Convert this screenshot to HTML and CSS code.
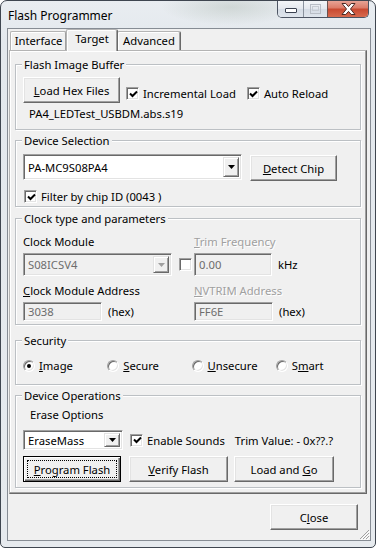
FILE: index.html
```html
<!DOCTYPE html>
<html>
<head>
<meta charset="utf-8">
<title>Flash Programmer</title>
<link rel="stylesheet" href="styles.css">
</head>
<body>
<div class="window">
  <div class="titlebar">
    <span class="title">Flash Programmer</span>
    <div class="caption-buttons">
      <div class="cb cb-min"><svg width="12" height="6" viewBox="0 0 12 6"><rect x="0.5" y="0.5" width="11" height="4" rx="0.5" fill="#fff" stroke="#3a4150"/></svg></div>
      <div class="cb cb-max"><svg width="11" height="10" viewBox="0 0 11 10"><rect x="0.5" y="0.5" width="10" height="9" fill="none" stroke="#b9bec6"/><rect x="2.5" y="2.5" width="6" height="4" fill="none" stroke="#c7ccd3"/></svg></div>
      <div class="cb cb-close"><svg width="15" height="12" viewBox="0 0 15 12"><path d="M1 0.5 H4.8 L7.5 3.6 L10.2 0.5 H14 L9.5 6 L14 11.5 H10.2 L7.5 8.4 L4.8 11.5 H1 L5.5 6 Z" fill="#fff" stroke="#4a2a25" stroke-width="1" stroke-linejoin="round"/></svg></div>
    </div>
  </div>
  <div class="client">
    <div class="tabs">
      <div class="tab tab-first">Interface</div>
      <div class="tab tab-active">Target</div>
      <div class="tab tab-last">Advanced</div>
    </div>
    <div class="panel">
      <div class="group g1">
        <span class="legend">Flash Image Buffer</span>
        <div class="row row-load">
          <button class="btn btn-load"><u>L</u>oad Hex Files</button>
          <label class="check check-inc"><span class="cbox"><svg width="9" height="9" viewBox="0 0 9 9"><path d="M1 3.5 L3.5 6 L8 1.5" fill="none" stroke="#000" stroke-width="2"/></svg></span>Incremental Load</label>
          <label class="check check-auto"><span class="cbox"><svg width="9" height="9" viewBox="0 0 9 9"><path d="M1 3.5 L3.5 6 L8 1.5" fill="none" stroke="#000" stroke-width="2"/></svg></span>Auto Reload</label>
        </div>
        <div class="filename">PA4_LEDTest_USBDM.abs.s19</div>
      </div>

      <div class="group g2">
        <span class="legend">Device Selection</span>
        <div class="row row-device">
          <div class="combo combo-device"><span class="combo-text">PA-MC9S08PA4</span><span class="combo-btn"><svg width="7" height="4" viewBox="0 0 7 4"><path d="M0 0 H7 L3.5 4 Z" fill="#000"/></svg></span></div>
          <button class="btn btn-detect"><u>D</u>etect Chip</button>
        </div>
        <label class="check check-filter"><span class="cbox"><svg width="9" height="9" viewBox="0 0 9 9"><path d="M1 3.5 L3.5 6 L8 1.5" fill="none" stroke="#000" stroke-width="2"/></svg></span>Filter by chip ID (0043 )</label>
      </div>

      <div class="group g3">
        <span class="legend">Clock type and parameters</span>
        <div class="grid-clock">
          <div class="lbl">Clock Module</div>
          <div class="lbl disabled"><u>T</u>rim Frequency</div>
          <div class="cell-combo">
            <div class="combo combo-clock off"><span class="combo-text">S08ICSV4</span><span class="combo-btn"><svg width="7" height="4" viewBox="0 0 7 4"><path d="M0 0 H7 L3.5 4 Z" fill="#a0a0a0"/></svg></span></div>
            <span class="cbox cbox-trim"></span>
          </div>
          <div class="cell-field">
            <div class="field field-trim">0.00</div><span class="unit">kHz</span>
          </div>
          <div class="lbl lbl-addr"><u>C</u>lock Module Address</div>
          <div class="lbl lbl-addr disabled"><u>N</u>VTRIM Address</div>
          <div class="cell-field2">
            <div class="field field-addr">3038</div><span class="unit">(hex)</span>
          </div>
          <div class="cell-field2">
            <div class="field field-addr">FF6E</div><span class="unit">(hex)</span>
          </div>
        </div>
      </div>

      <div class="group g4">
        <span class="legend">Security</span>
        <div class="row row-radios">
          <label class="radio-item"><span class="radio on"></span><u>I</u>mage</label>
          <label class="radio-item"><span class="radio"></span><u>S</u>ecure</label>
          <label class="radio-item"><span class="radio"></span><u>U</u>nsecure</label>
          <label class="radio-item"><span class="radio"></span>S<u>m</u>art</label>
        </div>
      </div>

      <div class="group g5">
        <span class="legend">Device Operations</span>
        <div class="erase-label">Erase Options</div>
        <div class="row row-erase">
          <div class="combo combo-erase"><span class="combo-text">EraseMass</span><span class="combo-btn"><svg width="7" height="4" viewBox="0 0 7 4"><path d="M0 0 H7 L3.5 4 Z" fill="#000"/></svg></span></div>
          <label class="check check-sounds"><span class="cbox"><svg width="9" height="9" viewBox="0 0 9 9"><path d="M1 3.5 L3.5 6 L8 1.5" fill="none" stroke="#000" stroke-width="2"/></svg></span>Enable Sounds</label>
          <span class="trim-value">Trim Value: - 0x??.?</span>
        </div>
        <div class="row row-ops">
          <button class="btn btn-default btn-program"><span class="focus"><u>P</u>rogram Flash</span></button>
          <button class="btn btn-verify"><u>V</u>erify Flash</button>
          <button class="btn btn-go">Load and <u>G</u>o</button>
        </div>
      </div>
    </div>
    <div class="footer">
      <button class="btn btn-close">C<u>l</u>ose</button>
    </div>
    <svg class="grip" width="12" height="12" viewBox="0 0 12 12">
      <path d="M11 2 L2 11 M11 5 L5 11 M11 8 L8 11" stroke="#a0a0a0" stroke-width="1"/>
      <path d="M12 3 L3 12 M12 6 L6 12 M12 9 L9 12" stroke="#fff" stroke-width="1"/>
    </svg>
  </div>
</div>
</body>
</html>
```

FILE: styles.css
```css
* { box-sizing: border-box; }
html, body { margin: 0; padding: 0; }
body {
  width: 376px;
  height: 548px;
  overflow: hidden;
  background: #ffffff;
  font-family: "Noto Sans", "DejaVu Sans", sans-serif;
  font-size: 11.25px;
  line-height: 15px;
  color: #000;
}
u { text-decoration-skip-ink: none; text-underline-offset: 1px; }

.window {
  width: 376px;
  height: 548px;
  border: 1px solid #3f4650;
  border-radius: 7px 7px 5px 5px;
  background:
    radial-gradient(ellipse 70px 18px at 230px 6px, rgba(120,140,120,0.22), rgba(120,140,120,0) 100%),
    linear-gradient(#e9edf1, #e3e8ed 40px, #e6eaee);
  padding-bottom: 6px;
  display: flex;
  flex-direction: column;
  overflow: hidden;
}

.titlebar {
  height: 27px;
  flex: none;
  display: flex;
  align-items: flex-start;
  padding: 0 6px 0 7px;
}
.title {
  flex: 1;
  font-size: 12px;
  line-height: 15px;
  margin-top: 7px;
  color: #000;
}
.caption-buttons {
  margin-top: -1px;
  height: 18px;
  display: flex;
  border: 1px solid #4d5563;
  border-top: none;
  border-radius: 0 0 5px 5px;
  overflow: hidden;
}
.cb {
  height: 17px;
  display: flex;
  align-items: center;
  justify-content: center;
}
.cb-min {
  width: 26px;
  border-right: 1px solid #8a929d;
  background: linear-gradient(#f5f7f9, #e4e8ee 50%, #d4dbe4 51%, #dfe5ec);
  align-items: flex-end;
  padding-bottom: 3px;
}
.cb-max {
  width: 24px;
  border-right: 1px solid #6b5350;
  background: linear-gradient(#f5f7f9, #e4e8ee 50%, #d4dbe4 51%, #dfe5ec);
}
.cb-close {
  width: 40px;
  background: linear-gradient(#e9a99c, #dc7d6a 45%, #c94a31 55%, #d76a4e);
}

.client {
  flex: none;
  height: 513px;
  margin: 0 4px 0 6px;
  border: 1px solid #868c94;
  background: #f0f0f0;
  display: flex;
  flex-direction: column;
  position: relative;
}

.tabs {
  display: flex;
  align-items: flex-start;
  padding-left: 2px;
  height: 21px;
  flex: none;
}
.tab {
  height: 19px;
  margin-top: 2px;
  background: #f0f0f0;
  border: 1px solid;
  border-color: #b4b4b4 #696969 transparent #b4b4b4;
  border-bottom: none;
  border-radius: 2px 2px 0 0;
  box-shadow: inset -1px 0 #a0a0a0, inset 1px 1px #fff;
  text-align: center;
  line-height: 17px;
}
.tab-first { width: 57px; margin-right: -1px; }
.tab-active {
  width: 52px;
  height: 22px;
  margin-top: 0;
  margin-bottom: -1px;
  position: relative;
  z-index: 2;
  line-height: 18px;
}
.tab-last { width: 64px; margin-left: -1px; }

.panel {
  flex: none;
  width: 358px;
  height: 444px;
  margin-left: 1px;
  border: 1px solid;
  border-color: #b4b4b4 #696969 #696969 #b4b4b4;
  box-shadow: inset -1px -1px #a0a0a0, inset 1px 1px #fff;
  padding: 0 5px;
  position: relative;
  z-index: 1;
}

.group {
  position: relative;
  border: 1px solid #bcc0c4;
  box-shadow: inset 1px 1px #fff, 1px 1px #fff;
  padding-left: 7px;
}
.legend {
  position: absolute;
  top: -8px;
  left: 6px;
  padding: 0 2px;
  background: #f0f0f0;
  line-height: 15px;
  white-space: nowrap;
}
.g1 { margin-top: 13px; height: 66px; padding-top: 12px; }
.g2 { margin-top: 10px; height: 67px; padding-top: 13px; }
.g3 { margin-top: 11px; height: 107px; padding-top: 15px; }
.g4 { margin-top: 15px; height: 45px; padding-top: 17px; }
.g5 { margin-top: 10px; height: 93px; padding-top: 11px; }

.row { display: flex; align-items: flex-start; }

/* buttons */
.btn {
  font: inherit;
  color: #000;
  background: #f0f0f0;
  border: 1px solid;
  border-color: #fff #696969 #696969 #fff;
  box-shadow: inset -1px -1px #a0a0a0, inset 1px 1px #e3e3e3;
  padding: 0;
  margin: 0;
  height: 26px;
  text-align: center;
  line-height: 15px;
}
.btn-default {
  border-color: #000;
  box-shadow: inset 1px 1px #fff, inset -1px -1px #696969, inset -2px -2px #a0a0a0;
  display: flex;
  padding: 3px;
}
.focus {
  flex: 1;
  border: 1px dotted #000;
  display: flex;
  align-items: center;
  justify-content: center;
}

.btn-load { width: 97px; }
.btn-detect { width: 87px; margin-left: 8px; margin-top: 1px; }
.btn-program { width: 98px; }
.btn-verify { width: 99px; margin-left: 8px; }
.btn-go { width: 100px; margin-left: 6px; }

/* checkboxes */
.check { display: flex; align-items: center; height: 15px; white-space: nowrap; }
.cbox {
  width: 13px;
  height: 13px;
  flex: none;
  background: #fff;
  border: 1px solid;
  border-color: #a0a0a0 #fff #fff #a0a0a0;
  box-shadow: inset 1px 1px #696969, inset -1px -1px #e3e3e3;
  display: flex;
  align-items: center;
  justify-content: center;
  margin-right: 4px;
}
.cbox svg { display: block; margin: 1px 0 0 1px; }
.check-inc { margin-left: 6px; margin-top: 9px; }
.check-auto { margin-left: 11px; margin-top: 9px; }
.check-filter { margin-top: 8px; margin-left: 1px; }

.filename { margin-top: 3px; padding-left: 6px; }

/* combos and fields */
.combo {
  display: flex;
  background: #fff;
  border: 1px solid;
  border-color: #a0a0a0 #fff #fff #a0a0a0;
  box-shadow: inset 1px 1px #696969, inset -1px -1px #e3e3e3;
  padding: 2px;
}
.combo-text { flex: 1; padding-left: 2px; display: flex; align-items: center; white-space: nowrap; }
.combo-btn {
  width: 16px;
  flex: none;
  background: #f0f0f0;
  border: 1px solid;
  border-color: #e3e3e3 #696969 #696969 #e3e3e3;
  box-shadow: inset 1px 1px #fff, inset -1px -1px #a0a0a0;
  display: flex;
  align-items: center;
  justify-content: center;
}
.combo-device { width: 219px; height: 26px; }
.combo-clock { width: 149px; height: 23px; }
.combo-erase { width: 100px; height: 20px; }
.combo.off { background: #f0f0f0; color: #6d6d6d; }

.grid-clock {
  display: grid;
  grid-template-columns: 171px auto;
}
.lbl { height: 15px; white-space: nowrap; }
.lbl-addr { margin-top: 7px; }
.disabled { color: #a0a0a0; text-shadow: 1px 1px #fff; }
.cell-combo { display: flex; align-items: center; margin-top: 4px; height: 23px; }
.cbox-trim { margin-left: 7px; margin-right: 0; }
.cell-field { display: flex; align-items: center; margin-top: 4px; height: 23px; }
.cell-field2 { display: flex; align-items: center; margin-top: 4px; height: 19px; }
.field {
  background: #f0f0f0;
  color: #6d6d6d;
  border: 1px solid;
  border-color: #a0a0a0 #fff #fff #a0a0a0;
  box-shadow: inset 1px 1px #696969, inset -1px -1px #e3e3e3;
  padding-left: 4px;
  display: flex;
  align-items: center;
}
.field-trim { width: 78px; height: 23px; }
.field-addr { width: 79px; height: 19px; }
.unit { margin-left: 6px; }

/* radios */
.row-radios { height: 15px; align-items: center; }
.radio-item { display: flex; align-items: center; width: 85px; white-space: nowrap; }
.radio {
  width: 12px;
  height: 12px;
  flex: none;
  border-radius: 50%;
  background: #fff;
  border: 1px solid;
  border-color: #a0a0a0 #fff #fff #a0a0a0;
  box-shadow: inset 1px 1px #696969, inset -1px -1px #e3e3e3;
  margin-right: 4px;
  display: flex;
  align-items: center;
  justify-content: center;
}
.radio.on::after {
  content: "";
  width: 4px;
  height: 4px;
  border-radius: 50%;
  background: #000;
}

/* device ops */
.erase-label { padding-left: 7px; height: 15px; }
.row-erase { margin-top: 8px; height: 20px; align-items: center; }
.check-sounds { margin-left: 7px; }
.trim-value { margin-left: 10px; white-space: nowrap; }
.row-ops { margin-top: 6px; }

.footer {
  display: flex;
  justify-content: flex-end;
  padding: 10px 12px 0 0;
}
.btn-close { width: 88px; }

.grip {
  position: absolute;
  right: 0;
  bottom: 0;
}
```
